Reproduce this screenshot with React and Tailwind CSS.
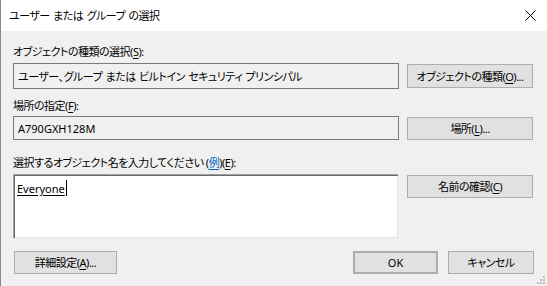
import React from "react";

const U = ({ children }) => <span className="underline underline-offset-2">{children}</span>;

const Btn = ({ children, className = "" }) => (
  <div
    className={
      "flex items-center justify-center whitespace-nowrap bg-[#e1e1e1] border border-[#adadad] text-[11px] leading-none text-black " +
      className
    }
  >
    {children}
  </div>
);

export default function App() {
  return (
    <div className="relative w-[547px] h-[286px] overflow-hidden bg-[#f0f0f0] border-l border-[#8a8a8a] font-['Noto_Sans','Noto_Sans_CJK_JP',sans-serif] [font-feature-settings:'palt'] text-[11px] tracking-[-0.5px] text-black whitespace-nowrap">
      <div className="h-[31px] bg-white flex items-center justify-between pl-[8px] pr-[10px]">
        <span className="text-[11px] leading-none [word-spacing:1px]">ユーザー または グループ の選択</span>
        <svg width="11" height="11" viewBox="0 0 11 11" className="mr-[1px]">
          <path d="M0.5 0.5 L10.5 10.5 M10.5 0.5 L0.5 10.5" stroke="#000" strokeWidth="1" fill="none" />
        </svg>
      </div>

      <div className="flex flex-col pl-[12px] pr-[13px]">
        <div className="mt-[13px] h-[16px] leading-[16px]">
          オブジェクトの種類の選択(<U>S</U>):
        </div>
        <div className="mt-[3px] flex items-center gap-[8px]">
          <div className="w-[386px] h-[26px] border border-[#7a7a7a] bg-[#f0f0f0] flex items-center pl-[4px] leading-none [word-spacing:1px]">
            ユーザー、グループ または ビルトイン セキュリティ プリンシパル
          </div>
          <Btn className="w-[126px] h-[24px]">
            オブジェクトの種類(<U>O</U>)...
          </Btn>
        </div>

        <div className="mt-[9px] h-[16px] leading-[16px]">
          場所の指定(<U>F</U>):
        </div>
        <div className="mt-[2px] flex items-center gap-[8px]">
          <div className="w-[386px] h-[24px] border border-[#7a7a7a] bg-[#f0f0f0] flex items-center pl-[4px] leading-none tracking-normal">
            A790GXH128M
          </div>
          <Btn className="w-[126px] h-[23px]">
            場所(<U>L</U>)...
          </Btn>
        </div>

        <div className="mt-[15px] h-[16px] leading-[16px]">
          選択するオブジェクト名を入力してください (<span className="text-[#0066cc] underline underline-offset-2">例</span>)(<U>E</U>):
        </div>
        <div className="mt-[3px] flex items-start gap-[8px]">
          <div className="w-[386px] h-[65px] bg-white border border-t-[#a0a0a0] border-l-[#a0a0a0] border-r-[#f0f0f0] border-b-[#f0f0f0] shadow-[inset_1px_1px_0_#696969,inset_-1px_-1px_0_#e3e3e3] pl-[3px] pt-[5px] tracking-normal">
            <div className="flex items-center h-[16px]">
              <span className="underline underline-offset-2 leading-none">Everyone</span>
              <span className="w-[1px] h-[16px] bg-black ml-[1px]" />
            </div>
          </div>
          <Btn className="mt-[1px] w-[126px] h-[23px]">
            名前の確認(<U>C</U>)
          </Btn>
        </div>

        <div className="mt-[12px] flex items-center">
          <Btn className="ml-[1px] w-[103px] h-[23px]">
            詳細設定(<U>A</U>)...
          </Btn>
          <div className="flex-1" />
          <Btn className="w-[85px] h-[23px] border-2 border-[#0078d7] tracking-normal">OK</Btn>
          <Btn className="ml-[10px] w-[86px] h-[23px]">キャンセル</Btn>
        </div>
      </div>

      <div className="absolute right-[2px] bottom-[2px] grid grid-cols-3 gap-[1px] w-[8px]">
        <span />
        <span />
        <span className="w-[2px] h-[2px] bg-[#bcbcbc]" />
        <span />
        <span className="w-[2px] h-[2px] bg-[#bcbcbc]" />
        <span className="w-[2px] h-[2px] bg-[#bcbcbc]" />
        <span className="w-[2px] h-[2px] bg-[#bcbcbc]" />
        <span className="w-[2px] h-[2px] bg-[#bcbcbc]" />
        <span className="w-[2px] h-[2px] bg-[#bcbcbc]" />
      </div>
    </div>
  );
}
